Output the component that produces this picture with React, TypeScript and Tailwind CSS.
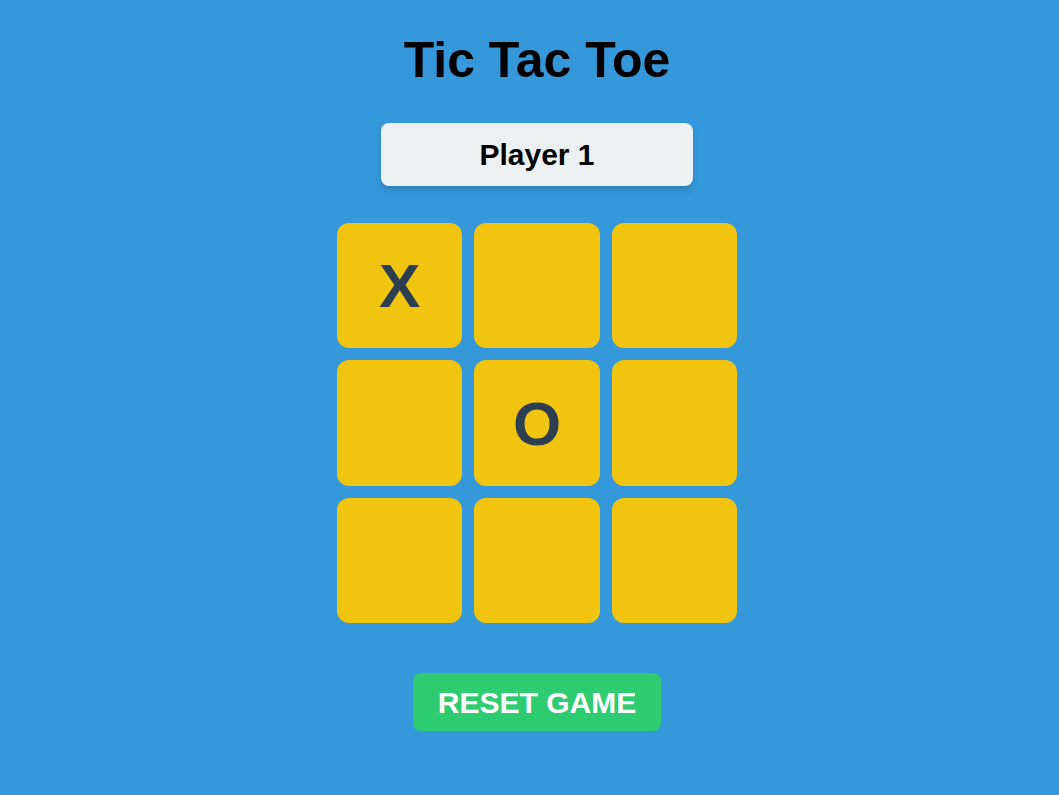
import React, { useState } from 'react';

type Cell = 'X' | 'O' | null;

const initialBoard: Cell[] = ['X', null, null, null, 'O', null, null, null, null];

const App = () => {
  const [board, setBoard] = useState<Cell[]>(initialBoard);
  const [player, setPlayer] = useState<1 | 2>(1);

  const handleClick = (index: number) => {
    if (board[index]) return;
    const next = [...board];
    next[index] = player === 1 ? 'X' : 'O';
    setBoard(next);
    setPlayer(player === 1 ? 2 : 1);
  };

  const resetGame = () => {
    setBoard(Array(9).fill(null));
    setPlayer(1);
  };

  return (
    <div className="flex min-h-[795px] w-full flex-col items-center bg-[#3498db] pl-[15px] pt-8 font-['Liberation_Sans',Arial,sans-serif]">
      <h1 className="text-[50px] font-bold leading-[56px] text-black">Tic Tac Toe</h1>

      <div className="mt-[35px] flex h-[63px] w-[312px] items-center justify-center rounded-lg bg-[#ecf0f1] shadow-[0_4px_6px_rgba(0,0,0,0.15)]">
        <p className="text-[30px] font-bold text-black">Player {player}</p>
      </div>

      <div className="mt-[37px] grid w-[400px] grid-cols-3 gap-3">
        {board.map((cell, index) => (
          <button
            className="flex aspect-square items-center justify-center rounded-xl bg-[#f1c40f] text-[62px] font-bold text-[#2c3e50]"
            key={index}
            onClick={() => handleClick(index)}
          >
            {cell}
          </button>
        ))}
      </div>

      <button
        className="mt-[50px] flex h-[58px] items-center rounded-lg bg-[#2ecc71] px-[25px] text-[30px] font-bold text-white"
        onClick={resetGame}
      >
        RESET GAME
      </button>
    </div>
  );
};

export default App;
